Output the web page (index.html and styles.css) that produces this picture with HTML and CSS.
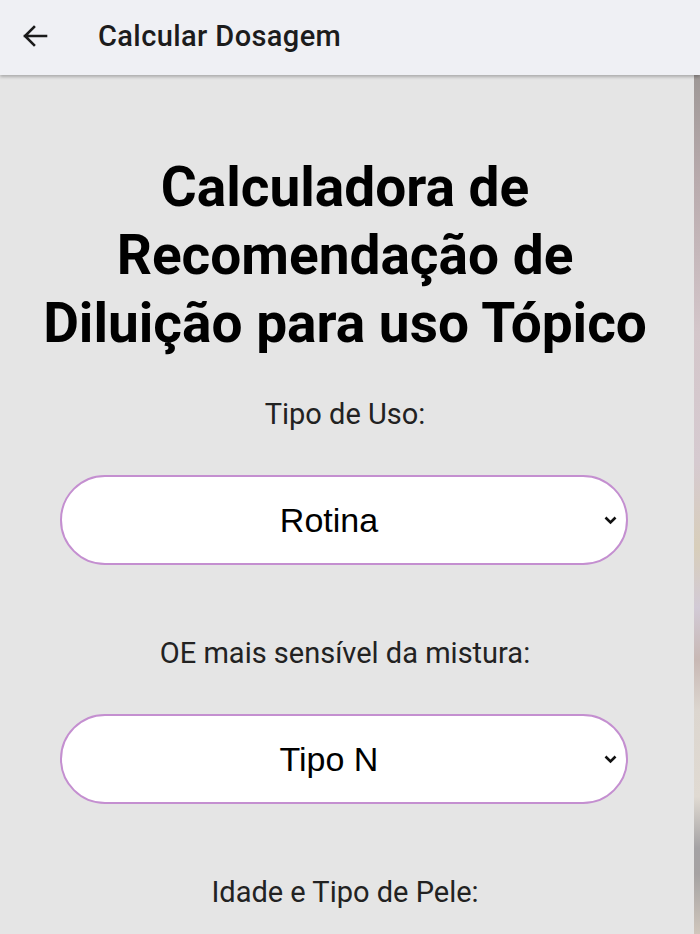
FILE: index.html
```html
<!DOCTYPE html>
<html lang="pt">
<head>
<meta charset="utf-8">
<title>Calcular Dosagem</title>
<link rel="stylesheet" href="styles.css">
</head>
<body>
<header class="topbar">
  <button class="back" aria-label="Voltar">
    <svg width="26" height="24" viewBox="0 0 26 24"><path d="M24 12H3M12 3L3 12l9 9" fill="none" stroke="#1a1a1a" stroke-width="2.6" stroke-linecap="square" stroke-linejoin="miter"/></svg>
  </button>
  <span class="topbar-title">Calcular Dosagem</span>
</header>
<div class="page">
  <main class="content">
    <h1 class="title">Calculadora de Recomendação de Diluição para uso Tópico</h1>
    <label class="field-label">Tipo de Uso:</label>
    <div class="select">
      <span class="select-value">Rotina</span>
      <svg class="chev" width="15" height="10" viewBox="0 0 15 10"><path d="M2.5 2.5l5 5 5-5" fill="none" stroke="#111" stroke-width="2.6"/></svg>
    </div>
    <label class="field-label">OE mais sensível da mistura:</label>
    <div class="select">
      <span class="select-value">Tipo N</span>
      <svg class="chev" width="15" height="10" viewBox="0 0 15 10"><path d="M2.5 2.5l5 5 5-5" fill="none" stroke="#111" stroke-width="2.6"/></svg>
    </div>
    <label class="field-label">Idade e Tipo de Pele:</label>
  </main>
  <div class="edge"></div>
</div>
</body>
</html>
```
FILE: styles.css
```css
* { box-sizing: border-box; }
html, body { margin: 0; padding: 0; height: 100%; overflow: hidden; }
body {
  background: #e5e5e5;
  font-family: Roboto, "Noto Sans", sans-serif;
  display: flex;
  flex-direction: column;
}
.topbar {
  height: 75px;
  flex: none;
  background: #eff0f4;
  display: flex;
  align-items: center;
  padding-bottom: 3px;
  box-shadow: 0 2px 3px rgba(0,0,0,0.25);
  position: relative;
  z-index: 1;
}
.back {
  border: 0;
  background: none;
  padding: 0;
  margin-left: 21px;
  width: 28px;
  height: 28px;
  display: flex;
  align-items: center;
  justify-content: center;
}
.topbar-title {
  margin-left: 49px;
  font-size: 29px;
  font-weight: 500;
  color: #1c1c1c;
  letter-spacing: 0.4px;
}
.page {
  flex: 1;
  display: flex;
}
.content {
  flex: 1;
  display: flex;
  flex-direction: column;
  align-items: center;
  padding: 78px 24px 0 20px;
}
.title {
  margin: 0;
  font-size: 55px;
  line-height: 68px;
  font-weight: 700;
  text-align: center;
  color: #000;
}
.field-label {
  margin-top: 40px;
  font-size: 29px;
  line-height: 34px;
  color: #222;
}
.select {
  margin: 44px 42px 0 40px;
  align-self: stretch;
  height: 90px;
  border: 2px solid #c48fd0;
  border-radius: 45px;
  background: #fff;
  display: flex;
  align-items: center;
  padding: 0 8px 0 18px;
}
.select + .field-label { margin-top: 71px; }
.select-value {
  flex: 1;
  text-align: center;
  font-family: "Liberation Sans", Arial, sans-serif;
  font-size: 34px;
  color: #000;
}
.chev { margin-left: 25px; flex: none; }
.edge {
  width: 6px;
  flex: none;
  background: linear-gradient(to bottom,
    #9e9896 0%, #b8aaac 12%, #d4c6ca 30%, #d6cad0 45%, #d8ceba 55%,
    #d2cad6 62%, #c8b8b4 68%, #dcd6cf 74%, #e0dad2 84%, #a4a2a4 90%, #a6a2a2 93%, #d0c6bc 100%);
}
```
